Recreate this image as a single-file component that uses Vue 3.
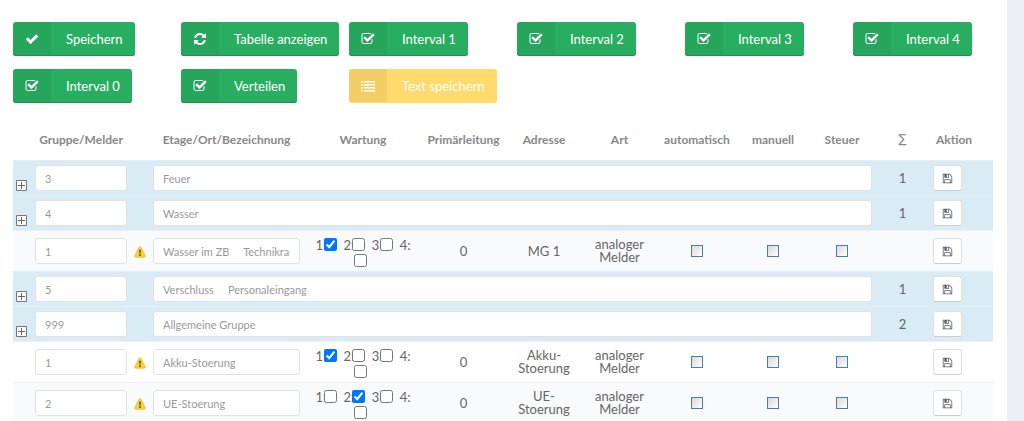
<script setup>
import { reactive } from 'vue'

const icons = {
  check: 'M1671 566q0 40-28 68l-724 724-136 136q-28 28-68 28t-68-28l-136-136-362-362q-28-28-28-68t28-68l136-136q28-28 68-28t68 28l294 295 656-657q28-28 68-28t68 28l136 136q28 28 28 68z',
  refresh: 'M1639 1056q0 5-1 7-64 268-268 434.5t-478 166.5q-146 0-282.5-55t-243.5-157l-129 129q-19 19-45 19t-45-19-19-45v-448q0-26 19-45t45-19h448q26 0 45 19t19 45-19 45l-137 137q71 66 161 102t187 36q134 0 250-65t186-179q11-17 53-117 8-23 30-23h192q13 0 22.5 9.5t9.5 22.5zm25-800v448q0 26-19 45t-45 19h-448q-26 0-45-19t-19-45 19-45l138-138q-148-137-349-137-134 0-250 65t-186 179q-11 17-53 117-8 23-30 23h-199q-13 0-22.5-9.5t-9.5-22.5v-7q65-268 270-434.5t480-166.5q146 0 284 55.5t245 156.5l130-129q19-19 45-19t45 19 19 45z',
  square: 'M1472 930v318q0 119-84.5 203.5t-203.5 84.5h-832q-119 0-203.5-84.5t-84.5-203.5v-832q0-119 84.5-203.5t203.5-84.5h832q63 0 117 25 15 7 18 23 3 17-9 29l-49 49q-10 10-23 10-3 0-9-2-23-6-45-6h-832q-66 0-113 47t-47 113v832q0 66 47 113t113 47h832q66 0 113-47t47-113v-254q0-13 9-22l64-64q10-10 23-10 6 0 12 3 20 8 20 29zm231-489l-814 814q-24 24-57 24t-57-24l-430-430q-24-24-24-57t24-57l110-110q24-24 57-24t57 24l263 263 647-647q24-24 57-24t57 24l110 110q24 24 24 57t-24 57z',
  list: 'M0 256h256v192H0zM384 256h1408v192H384zM0 640h256v192H0zM384 640h1408v192H384zM0 1024h256v192H0zM384 1024h1408v192H384zM0 1408h256v192H0zM384 1408h1408v192H384z',
  floppy: 'M512 1536h768v-384h-768v384zm896 0h128v-896q0-14-10-38.5t-20-34.5l-281-281q-10-10-34-20t-39-10v416q0 40-28 68t-68 28h-576q-40 0-68-28t-28-68v-416h-128v1280h128v-416q0-40 28-68t68-28h832q40 0 68 28t28 68v416zm-384-928v-320q0-13-9.5-22.5t-22.5-9.5h-192q-13 0-22.5 9.5t-9.5 22.5v320q0 13 9.5 22.5t22.5 9.5h192q13 0 22.5-9.5t9.5-22.5zm640 32v928q0 40-28 68t-68 28h-1344q-40 0-68-28t-28-68v-1344q0-40 28-68t68-28h928q40 0 88 20t76 48l280 280q28 28 48 76t20 88z',
}

const actions = [
  { label: 'Speichern', icon: 'check' },
  { label: 'Tabelle anzeigen', icon: 'refresh' },
  { label: 'Interval 1', icon: 'square' },
  { label: 'Interval 2', icon: 'square' },
  { label: 'Interval 3', icon: 'square' },
  { label: 'Interval 4', icon: 'square' },
  { label: 'Interval 0', icon: 'square' },
  { label: 'Verteilen', icon: 'square' },
  { label: 'Text speichern', icon: 'list', disabled: true },
]

const columns = [
  { label: '', width: 18 },
  { label: 'Gruppe/Melder', width: 100 },
  { label: '', width: 18 },
  { label: 'Etage/Ort/Bezeichnung', width: 155 },
  { label: 'Wartung', width: 118 },
  { label: 'Primärleitung', width: 83 },
  { label: 'Adresse', width: 78 },
  { label: 'Art', width: 73 },
  { label: 'automatisch', width: 82 },
  { label: 'manuell', width: 70 },
  { label: 'Steuer', width: 68 },
  { label: '∑', width: 53, kind: 'sum' },
  { label: 'Aktion', width: 64, kind: 'last' },
]

const flags = ['automatisch', 'manuell', 'Steuer']
const gap = '\u00a0'.repeat(5)

const rows = reactive([
  { group: true, nr: '3', name: 'Feuer', sum: 1 },
  { group: true, nr: '4', name: 'Wasser', sum: 1 },
  { nr: '1', name: `Wasser im ZB${gap}Technikraum`, wartung: [true, false, false, false], line: 0, adresse: 'MG 1', striped: true },
  { group: true, nr: '5', name: `Verschluss${gap}Personaleingang`, sum: 1 },
  { group: true, nr: '999', name: 'Allgemeine Gruppe', sum: 2 },
  { nr: '1', name: 'Akku-Stoerung', wartung: [true, false, false, false], line: 0, adresse: 'Akku-Stoerung' },
  { nr: '2', name: 'UE-Stoerung', wartung: [false, true, false, false], line: 0, adresse: 'UE-Stoerung', striped: true },
])
</script>

<template>
  <main class="panel">
    <div class="toolbar">
      <button v-for="a in actions" :key="a.label" type="button" class="action" :disabled="a.disabled">
        <span class="action-icon">
          <svg viewBox="0 0 1792 1792" aria-hidden="true"><path :d="icons[a.icon]" /></svg>
        </span>
        <span class="action-label">{{ a.label }}</span>
      </button>
    </div>

    <table class="grid">
      <colgroup>
        <col v-for="(c, i) in columns" :key="i" :style="{ width: c.width + 'px' }" />
      </colgroup>
      <thead>
        <tr>
          <th v-for="(c, i) in columns" :key="i" scope="col" :class="c.kind">{{ c.label }}</th>
        </tr>
      </thead>
      <tbody>
        <tr v-for="(r, i) in rows" :key="i" :class="{ group: r.group, detail: !r.group, striped: r.striped }">
          <td class="toggle">
            <button v-if="r.group" type="button" class="expand" aria-label="Aufklappen">
              <svg viewBox="0 0 11 11" aria-hidden="true">
                <path d="M.5.5h10v10H.5z" fill="#f8fbfc" stroke="#777" />
                <path d="M2 5.5h7M5.5 2v7" stroke="#666" />
              </svg>
            </button>
          </td>
          <td><input v-model="r.nr" class="field" type="text" aria-label="Gruppe/Melder" /></td>
          <td class="icon-cell">
            <svg v-if="!r.group" class="warning" viewBox="0 0 12 12" role="img" aria-label="Warnung">
              <path d="M6 .8c.5 0 .8.2 1 .6l4.1 8c.4.9 0 1.8-.9 1.8H1.8c-.9 0-1.3-.9-.9-1.8l4.1-8c.2-.4.5-.6 1-.6z" fill="#fbd32f" stroke="#dfb33b" stroke-width=".7" />
              <path d="M5.1 3.8h1.8l-.4 3.7h-1z" fill="#55471c" />
              <circle cx="6" cy="9" r=".9" fill="#55471c" />
            </svg>
          </td>
          <td :colspan="r.group ? 8 : 1">
            <input v-model="r.name" class="field" type="text" aria-label="Etage/Ort/Bezeichnung" />
          </td>
          <template v-if="!r.group">
            <td class="wartung">
              <template v-for="(w, n) in r.wartung" :key="n">
                <label>{{ n + 1 }}:<br v-if="n === 3" /><input v-model="r.wartung[n]" type="checkbox" /></label>{{ ' ' }}
              </template>
            </td>
            <td>{{ r.line }}</td>
            <td>{{ r.adresse }}</td>
            <td>analoger Melder</td>
            <td v-for="f in flags" :key="f"><input type="checkbox" class="flag" :aria-label="f" /></td>
          </template>
          <td>{{ r.sum }}</td>
          <td class="last">
            <button type="button" class="save" aria-label="Speichern">
              <svg viewBox="0 0 1792 1792" aria-hidden="true"><path :d="icons.floppy" /></svg>
            </button>
          </td>
        </tr>
      </tbody>
    </table>
  </main>
</template>

<style>
body {
  margin: 0;
  background: #eceef3;
}
</style>

<style scoped>
.panel {
  box-sizing: border-box;
  min-height: 100vh;
  margin-right: 17px;
  padding: 22px 14px 0 13px;
  background: #fff;
  color: #666;
  font: 13px/13px Lato, "Open Sans", sans-serif;
}

.toolbar {
  display: grid;
  grid-template-columns: repeat(5, 168px) 1fr;
  row-gap: 13px;
  justify-items: start;
}

.action {
  display: flex;
  height: 34px;
  padding: 0;
  overflow: hidden;
  border: 0;
  border-radius: 3px;
  background: #29ae61;
  box-shadow: inset 0 -1px #209150;
  color: #fff;
  font: inherit;
  white-space: nowrap;
}

.action:disabled {
  background: #ffda6d;
  box-shadow: none;
}

.action-icon {
  display: flex;
  align-items: center;
  justify-content: center;
  width: 38px;
  height: 33px;
  background: rgba(0, 0, 0, 0.05);
}

.action-icon svg {
  width: 14px;
  height: 14px;
  fill: currentColor;
}

.action-label {
  padding: 0 12px 0 15px;
  line-height: 34px;
}

.grid {
  width: 100%;
  margin-top: 15px;
  border-collapse: separate;
  border-spacing: 0;
  table-layout: fixed;
  text-align: center;
}

th {
  height: 42px;
  padding: 0;
  color: #888;
  font-size: 12px;
  font-weight: 700;
  white-space: nowrap;
}

td {
  box-sizing: border-box;
  padding: 0 4px;
  border-top: 1px solid #eeeff0;
  vertical-align: middle;
}

.group td {
  height: 35px;
  border-top-color: #e3eff5;
  background: #d9ecf5;
}

.detail td {
  height: 41px;
}

.striped td {
  background: #f9fafb;
}

td.toggle {
  padding: 0 0 4px 3px;
  text-align: left;
  vertical-align: bottom;
}

td.icon-cell {
  padding: 0;
}

th.sum {
  font-family: "DejaVu Sans", sans-serif;
  font-weight: 400;
}

th.last {
  padding-left: 7px;
  text-align: left;
}

td.last {
  text-align: left;
}

.expand {
  display: block;
  width: 11px;
  height: 11px;
  padding: 0;
  border: 0;
  background: none;
}

.expand svg,
.save svg {
  display: block;
  fill: none;
}

.field {
  display: block;
  box-sizing: border-box;
  width: 100%;
  height: 26px;
  padding: 0 9px;
  border: 1px solid #e0e3e6;
  border-radius: 3px;
  background: #fff;
  color: #999;
  font: 11px Lato, "Open Sans", sans-serif;
}

.warning {
  display: block;
  width: 12px;
  height: 12px;
  margin: 2px auto 0;
}

td.wartung {
  padding-top: 3px;
  line-height: 16px;
}

.wartung input {
  width: 13px;
  height: 13px;
  margin: 0 3px 0 -2px;
  vertical-align: -1px;
}

.flag {
  display: block;
  box-sizing: border-box;
  width: 12px;
  height: 12px;
  margin: 0 auto;
  border: 1px solid #4a7bab;
  background: linear-gradient(135deg, #d9d9d6, #fff);
  appearance: none;
}

.save {
  display: flex;
  align-items: center;
  justify-content: center;
  width: 29px;
  height: 26px;
  padding: 0;
  border: 1px solid #e0e0e0;
  border-bottom-color: #ccc;
  border-radius: 3px;
  background: #fff;
}

.save svg {
  width: 11px;
  height: 11px;
  fill: #555b66;
}
</style>
